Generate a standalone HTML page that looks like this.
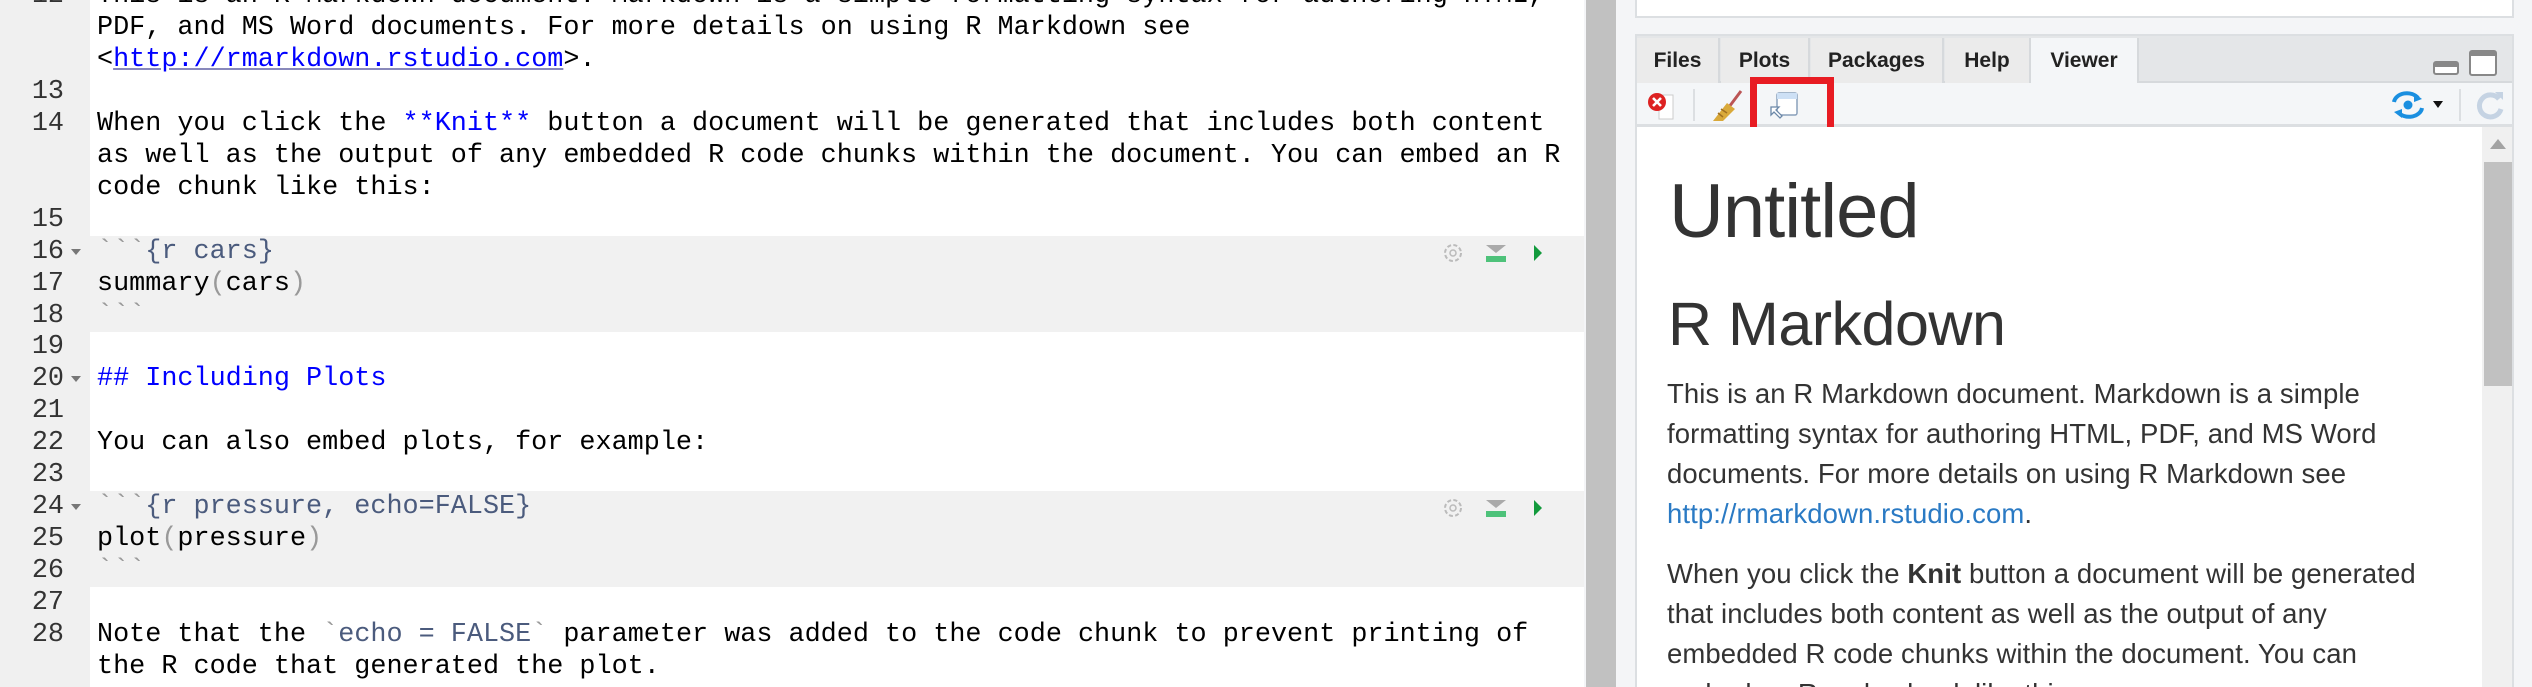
<!DOCTYPE html>
<html style="width:2532px;height:687px;overflow:hidden"><head><meta charset="utf-8"><style>
*{margin:0;padding:0;box-sizing:border-box}
body{width:2532px;height:687px;overflow:hidden;background:#f4f5f7;position:relative;font-family:"Liberation Sans",sans-serif}
#ed{position:absolute;left:0;top:0;width:1584px;height:687px;background:#fff;overflow:hidden}
#gut{position:absolute;left:0;top:0;width:90px;height:687px;background:#f0f0f0}
.chunk{position:absolute;left:90px;width:1494px;height:96px;background:#f1f1f1}
.r{position:absolute;left:0;height:32px;line-height:32px;font-family:"Liberation Mono",monospace;font-size:26.8px;white-space:pre;color:#000}
.n{position:absolute;left:0;width:64px;text-align:right;color:#333}
.t{position:absolute;left:97px}
.fold{position:absolute;left:71px;top:13px;width:0;height:0;border-left:5px solid transparent;border-right:5px solid transparent;border-top:6px solid #777}
.b{color:#0000ff}
.lk{color:#0000ff;text-decoration:underline;text-decoration-color:#8888bb}
.h{color:#4b5b7d}
.g{color:#999}
#split{position:absolute;left:1586px;top:0;width:30px;height:687px;background:#c1c1c1}
#top{position:absolute;left:1635px;top:-2px;width:879px;height:20px;background:#fff;border:2px solid #dcdfe2}
#pane{position:absolute;left:1635px;top:34px;width:879px;height:653px;border:2px solid #dcdfe2;border-bottom:none;background:#fff;overflow:hidden}
#tabs{position:absolute;left:0;top:0;width:875px;height:47px;background:#e4e6e8;border-bottom:2px solid #d6d9dc}
.tab{position:absolute;top:2px;height:45px;background:#ebebeb;border-right:2px solid #d6d9dc;font-weight:bold;font-size:21px;line-height:46px;text-align:center;color:#222}
#tb{position:absolute;left:0;top:47px;width:875px;height:44px;background:#f4f6f8;border-bottom:3px solid #dcdfe2}
#view{position:absolute;left:0;top:91px;width:845px;height:570px;background:#fff;color:#333}
#sb{position:absolute;left:845px;top:91px;width:32px;height:570px;background:#f0f0f0}
.p{position:absolute;left:30px;font-size:27.5px;line-height:40px;white-space:nowrap;letter-spacing:0.1px}
</style></head><body>
<div id="ed">
<div id="gut"></div>
<div class="chunk" style="top:236px"></div>
<div class="chunk" style="top:491px"></div>

<div class="r" style="top:-20px"><span class="n">12</span><span class="t">This is an R Markdown document. Markdown is a simple formatting syntax for authoring HTML,</span></div>
<div class="r" style="top:12px"><span class="t">PDF, and MS Word documents. For more details on using R Markdown see</span></div>
<div class="r" style="top:44px"><span class="t">&lt;<span class="lk">http://rmarkdown.rstudio.com</span>&gt;.</span></div>
<div class="r" style="top:76px"><span class="n">13</span></div>
<div class="r" style="top:108px"><span class="n">14</span><span class="t">When you click the <span class="b">**Knit**</span> button a document will be generated that includes both content</span></div>
<div class="r" style="top:140px"><span class="t">as well as the output of any embedded R code chunks within the document. You can embed an R</span></div>
<div class="r" style="top:172px"><span class="t">code chunk like this:</span></div>
<div class="r" style="top:204px"><span class="n">15</span></div>
<div class="r" style="top:236px"><span class="n">16</span><i class="fold"></i><span class="t"><span class="g">&#96;&#96;&#96;</span><span class="h">{r cars}</span></span></div>
<div class="r" style="top:268px"><span class="n">17</span><span class="t">summary<span class="g">(</span>cars<span class="g">)</span></span></div>
<div class="r" style="top:300px"><span class="n">18</span><span class="t"><span class="g">&#96;&#96;&#96;</span></span></div>
<div class="r" style="top:331px"><span class="n">19</span></div>
<div class="r" style="top:363px"><span class="n">20</span><i class="fold"></i><span class="t b">## Including Plots</span></div>
<div class="r" style="top:395px"><span class="n">21</span></div>
<div class="r" style="top:427px"><span class="n">22</span><span class="t">You can also embed plots, for example:</span></div>
<div class="r" style="top:459px"><span class="n">23</span></div>
<div class="r" style="top:491px"><span class="n">24</span><i class="fold"></i><span class="t"><span class="g">&#96;&#96;&#96;</span><span class="h">{r pressure, echo=FALSE}</span></span></div>
<div class="r" style="top:523px"><span class="n">25</span><span class="t">plot<span class="g">(</span>pressure<span class="g">)</span></span></div>
<div class="r" style="top:555px"><span class="n">26</span><span class="t"><span class="g">&#96;&#96;&#96;</span></span></div>
<div class="r" style="top:587px"><span class="n">27</span></div>
<div class="r" style="top:619px"><span class="n">28</span><span class="t">Note that the <span class="g">&#96;</span><span class="h">echo = FALSE</span><span class="g">&#96;</span> parameter was added to the code chunk to prevent printing of</span></div>
<div class="r" style="top:651px"><span class="t">the R code that generated the plot.</span></div>

<svg style="position:absolute;left:1436px;top:238px" width="120" height="30" viewBox="0 0 120 30">
<circle cx="17" cy="15" r="8" fill="none" stroke="#bbb" stroke-width="2" stroke-dasharray="4 2.3"/><circle cx="17" cy="15" r="3" fill="none" stroke="#bbb" stroke-width="1.5"/>
<path d="M50 7h20l-10 8z" fill="#aaa"/><rect x="50" y="18" width="20" height="6" fill="#4ec27a"/>
<path d="M98 7l8 8-8 8z" fill="#129a3c"/></svg>
<svg style="position:absolute;left:1436px;top:493px" width="120" height="30" viewBox="0 0 120 30">
<circle cx="17" cy="15" r="8" fill="none" stroke="#bbb" stroke-width="2" stroke-dasharray="4 2.3"/><circle cx="17" cy="15" r="3" fill="none" stroke="#bbb" stroke-width="1.5"/>
<path d="M50 7h20l-10 8z" fill="#aaa"/><rect x="50" y="18" width="20" height="6" fill="#4ec27a"/>
<path d="M98 7l8 8-8 8z" fill="#129a3c"/></svg>
</div>
<div id="split"></div>
<div id="top"></div>
<div id="pane">
 <div id="tabs">
  <div class="tab" style="left:0;width:83px">Files</div>
  <div class="tab" style="left:84px;width:89px">Plots</div>
  <div class="tab" style="left:174px;width:133px">Packages</div>
  <div class="tab" style="left:308px;width:86px">Help</div>
  <div class="tab" style="left:394px;width:108px;background:#f4f6f8;height:47px">Viewer</div>
  <svg style="position:absolute;left:796px;top:14px" width="64" height="26" viewBox="0 0 64 26"><rect x="1" y="12" width="24" height="12" rx="2" fill="#fff" stroke="#888" stroke-width="2"/><rect x="1" y="12" width="24" height="5" fill="#888"/><rect x="37" y="1" width="26" height="24" rx="2" fill="#fff" stroke="#888" stroke-width="2"/><rect x="37" y="1" width="26" height="5" fill="#888"/></svg>
 </div>
 <div id="tb">
  <svg style="position:absolute;left:10px;top:8px" width="36" height="30" viewBox="0 0 36 30"><rect x="12" y="4" width="14" height="24" fill="#fff" stroke="#ccc"/><circle cx="10" cy="11" r="9" fill="#d22"/><path d="M6 7l8 8M14 7l-8 8" stroke="#fff" stroke-width="2.6"/></svg>
  <div style="position:absolute;left:56px;top:6px;width:2px;height:32px;background:#dcdfe2"></div>
  <svg style="position:absolute;left:72px;top:6px" width="36" height="34" viewBox="0 0 36 34"><path d="M32 2L20 18" stroke="#b55" stroke-width="3"/><path d="M18 14l8 6-12 12-10 0z" fill="#d9a93a"/><path d="M12 20l6 4M9 24l5 4" stroke="#a07020" stroke-width="1.5"/></svg>
  <svg style="position:absolute;left:130px;top:8px" width="34" height="28" viewBox="0 0 34 28"><rect x="10" y="2" width="20" height="22" rx="2" fill="#fff" stroke="#8aa0bb" stroke-width="1.5"/><rect x="10" y="2" width="20" height="6" fill="#cde0f5"/><path d="M4 24l0-8 8 0-3 3 6 6-2 2-6-6z" fill="#fff" stroke="#6b88a8" stroke-width="1.3"/></svg>
  <div style="position:absolute;left:113px;top:-6px;width:84px;height:61px;border:7px solid #e81c23"></div>
  <svg style="position:absolute;left:753px;top:7px" width="40" height="32" viewBox="0 0 40 32"><path d="M4 12a13 10 0 0 1 24-4" fill="none" stroke="#1a8fe0" stroke-width="4"/><path d="M32 18a13 10 0 0 1-24 4" fill="none" stroke="#1a8fe0" stroke-width="4"/><circle cx="18" cy="15" r="4.5" fill="#1a8fe0"/><path d="M24 3l8 6-8 3z M12 28l-8-6 8-3z" fill="#1a8fe0"/></svg>
  <div style="position:absolute;left:796px;top:18px;width:0;height:0;border-left:5px solid transparent;border-right:5px solid transparent;border-top:7px solid #111"></div>
  <div style="position:absolute;left:822px;top:6px;width:2px;height:32px;background:#dcdfe2"></div>
  <svg style="position:absolute;left:838px;top:6px" width="32" height="34" viewBox="0 0 32 34"><path d="M24 10a11 11 0 1 0 2 10" fill="none" stroke="#c5d3e3" stroke-width="5"/><path d="M20 3l8 0 0 8z" fill="#c5d3e3"/></svg>
 </div>
 <div id="view">
  <div style="position:absolute;left:32px;top:40px;font-size:76px;line-height:90px;color:#333;letter-spacing:-1px">Untitled</div>
  <div style="position:absolute;left:31px;top:162px;font-size:61px;line-height:70px;color:#333;letter-spacing:-0.5px">R Markdown</div>
  <div class="p" style="top:247px">This is an R Markdown document. Markdown is a simple</div>
  <div class="p" style="top:287px">formatting syntax for authoring HTML, PDF, and MS Word</div>
  <div class="p" style="top:327px">documents. For more details on using R Markdown see</div>
  <div class="p" style="top:367px"><span style="color:#2a7ac4">http://rmarkdown.rstudio.com</span>.</div>
  <div class="p" style="top:427px">When you click the <b>Knit</b> button a document will be generated</div>
  <div class="p" style="top:467px">that includes both content as well as the output of any</div>
  <div class="p" style="top:507px">embedded R code chunks within the document. You can</div>
  <div class="p" style="top:547px">embed an R code chunk like this:</div>
 </div>
 <div id="sb">
  <div style="position:absolute;left:8px;top:12px;width:0;height:0;border-left:8px solid transparent;border-right:8px solid transparent;border-bottom:10px solid #a3a3a3"></div>
  <div style="position:absolute;left:2px;top:35px;width:28px;height:224px;background:#c1c1c1"></div>
 </div>
</div>
</body></html>
